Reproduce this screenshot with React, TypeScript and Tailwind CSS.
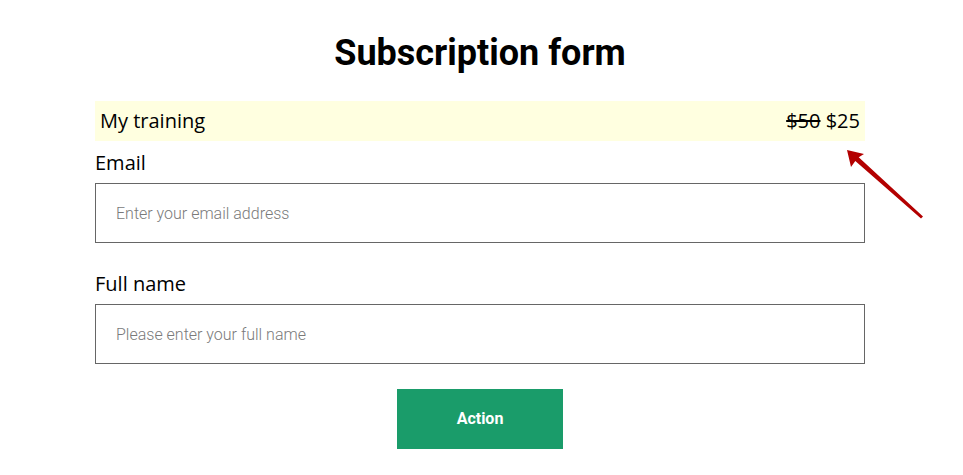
import React from "react";

export default function App() {
  return (
    <div className="relative w-[963px] h-[475px] bg-white overflow-hidden">
      <div className="w-[960px]">
        <div className="mx-auto w-[770px] flex flex-col">
          <h1 className="mt-[32px] h-[42px] text-center text-[36px] leading-[42px] font-bold text-black [font-family:Roboto,sans-serif]">
            Subscription form
          </h1>
          <div className="mt-[27px] h-[40px] bg-[#ffffe0] flex items-center justify-between px-[5px] text-[20px] text-black [font-family:'Open_Sans',sans-serif]">
            <span>My training</span>
            <span>
              <span className="line-through">$50</span> $25
            </span>
          </div>
          <label className="mt-[7px] h-[30px] leading-[30px] text-[20px] text-black [font-family:'Open_Sans',sans-serif]">
            Email
          </label>
          <input
            className="mt-[5px] h-[60px] border border-[#666666] px-[20px] text-[16px] font-light text-black placeholder:text-[#7a7a7a] outline-none [font-family:Roboto,sans-serif]"
            placeholder="Enter your email address"
          />
          <label className="mt-[26px] h-[30px] leading-[30px] text-[20px] text-black [font-family:'Open_Sans',sans-serif]">
            Full name
          </label>
          <input
            className="mt-[5px] h-[60px] border border-[#666666] px-[20px] text-[16px] font-light text-black placeholder:text-[#7a7a7a] outline-none [font-family:Roboto,sans-serif]"
            placeholder="Please enter your full name"
          />
          <button className="mt-[25px] mx-auto w-[166px] h-[60px] bg-[#1a9c6a] text-white text-[16px] font-bold [font-family:Roboto,sans-serif]">
            Action
          </button>
        </div>
      </div>
      <svg
        className="absolute left-0 top-0 pointer-events-none"
        width="963"
        height="475"
        viewBox="0 0 963 475"
      >
        <polygon
          points="847,150 864,154 858.7,157.2 923,216.4 921,218.6 855.3,160.9 851,167"
          fill="#b30000"
        />
      </svg>
    </div>
  );
}
